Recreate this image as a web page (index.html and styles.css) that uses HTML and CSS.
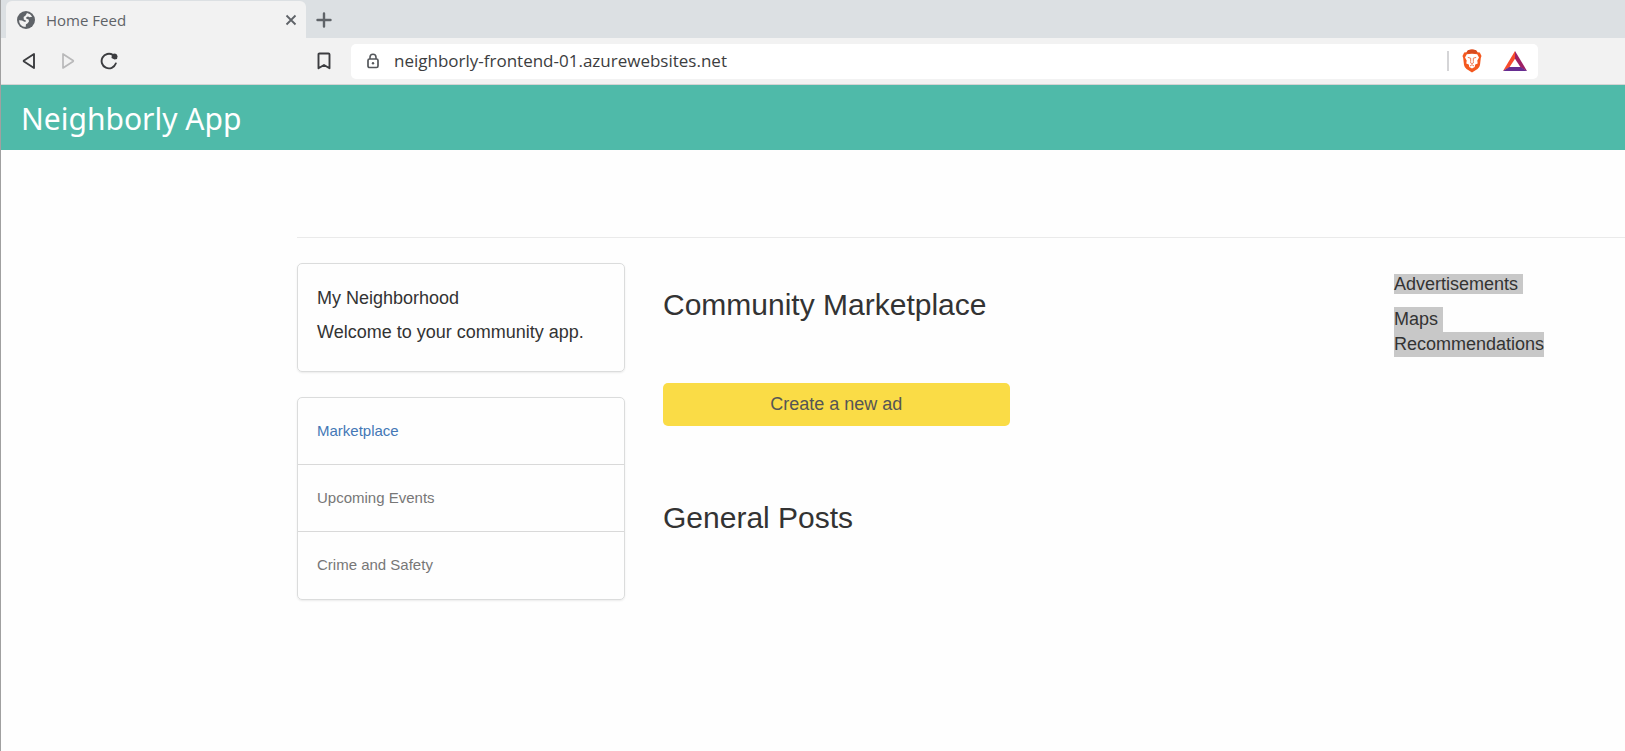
FILE: index.html
```html
<!DOCTYPE html>
<html lang="en">
<head>
<meta charset="utf-8">
<meta name="viewport" content="width=device-width, initial-scale=1">
<title>Home Feed</title>
<link rel="stylesheet" href="styles.css">
</head>
<body>
<div class="window">
  <div class="tab-strip">
    <div class="tab">
      <svg class="globe" width="18" height="18" viewBox="0 0 18 18" aria-hidden="true">
        <circle cx="9" cy="9" r="9" fill="#5f6368"/>
        <path d="M10 2Q13.500 2.600 15.200 5.800L12.600 6.200L11 5.400L9.200 6.200L9.400 7.800L11.600 8.600L12 10.600L10.400 12.400L9 13.200L8.600 16Q2.400 15.400 2 9.200L5 9.400L7.400 10.800L9 10.600L8.800 9.600L6.800 8.400L6.600 6L8.600 4.600z" fill="#f2f2f2"/>
      </svg>
      <span class="tab-title">Home Feed</span>
      <button class="icon-button" aria-label="Close tab">
        <svg width="12" height="12" viewBox="0 0 12 12"><path d="M1.500 1.500l9 9M10.500 1.500l-9 9" stroke="#5f6368" stroke-width="1.800"/></svg>
      </button>
    </div>
    <button class="icon-button new-tab" aria-label="New tab">
      <svg width="16" height="16" viewBox="0 0 16 16"><path d="M8 1.500v13M1.500 8h13" stroke="#5f6368" stroke-width="2.400" stroke-linecap="round"/></svg>
    </button>
  </div>

  <div class="toolbar">
    <div class="history">
      <button class="icon-button" aria-label="Back">
        <svg width="14" height="18" viewBox="0 0 14 18"><path d="M12 2v14L2 9.500Q1.400 9 2 8.500z" fill="none" stroke="#3c3d40" stroke-width="1.900" stroke-linejoin="round"/></svg>
      </button>
      <button class="icon-button" aria-label="Forward" disabled>
        <svg width="14" height="18" viewBox="0 0 14 18"><path d="M2 2v14l10-6.500q.6-.5 0-1z" fill="none" stroke="#b9b9ba" stroke-width="1.700" stroke-linejoin="round"/></svg>
      </button>
      <button class="icon-button" aria-label="Reload">
        <svg width="18" height="18" viewBox="0 0 18 18"><path d="M15.800 11.500A7.300 7.300 0 1 1 13 3" fill="none" stroke="#3c3d40" stroke-width="1.900" stroke-linecap="round"/><path d="M12 2l3-.5q2.500.5 2.500 3l-.5 2.500-2.500.5-3-1.500z" fill="#3c3d40"/></svg>
      </button>
    </div>
    <button class="icon-button bookmark" aria-label="Bookmark">
      <svg width="14" height="18" viewBox="0 0 14 18"><path d="M2.500 1.500h9q1 0 1 1v13.800L7 13l-5.500 3.300V2.500q0-1 1-1z" fill="none" stroke="#3c3d40" stroke-width="1.900" stroke-linejoin="round"/></svg>
    </button>
    <div class="address">
      <svg class="lock" width="14" height="16" viewBox="0 0 14 16" aria-hidden="true"><rect x="2" y="6" width="10" height="8.500" rx="1.500" fill="none" stroke="#55585c" stroke-width="1.700"/><path d="M4 6V4.200a3 3 0 0 1 6 0V6" fill="none" stroke="#55585c" stroke-width="1.600"/><circle cx="7" cy="10.200" r="1.200" fill="#55585c"/></svg>
      <input class="url" type="text" aria-label="Address" value="neighborly-frontend-01.azurewebsites.net">
      <span class="divider"></span>
      <button class="icon-button" aria-label="Brave Shields">
        <svg width="20" height="24" viewBox="0 0 20 24"><path d="M6 1.300Q10-.1 14 1.300L15.500 3.200L17.800 3.400L19.500 7L18.800 9L18 16Q17.500 18.500 15.500 20L10 23.500L4.500 20Q2.500 18.500 2 16L1.200 9L.5 7L2.200 3.400L4.500 3.200z" fill="#f4581f"/><path d="M6 1.300Q10-.1 14 1.300L15.500 3.200L14 4.400H6L4.500 3.200z" fill="#d64b20"/><path d="M4.800 5.300L10 4.700L15.200 5.300L17 8.500L15.300 11.500L15.700 14.500L13.200 15.500L12.700 18L10 19.500L7.300 18L6.800 15.500L4.300 14.500L4.700 11.500L3 8.500z" fill="#fff"/><path d="M5.800 8.400l2.900.8M14.200 8.400l-2.900.8M8.700 9.200v3.600M11.300 9.200v3.600M8 13.400l2 1.200 2-1.200M8 17l2-1.300 2 1.300" fill="none" stroke="#f1683a" stroke-width=".9"/></svg>
      </button>
      <button class="icon-button" aria-label="Rewards">
        <svg width="24" height="20" viewBox="0 0 24 20"><path d="M12 0v7.800L6.300 16.600L0 20z" fill="#f84c2c"/><path d="M12 0l12 20-6.300-3.400L12 7.800z" fill="#9e1f63"/><path d="M0 20l6.300-4h11.400L24 20z" fill="#662d91"/></svg>
      </button>
    </div>
  </div>

  <header class="app-header">
    <h1 class="app-title">Neighborly App</h1>
  </header>

  <div class="page">
    <hr class="rule">
    <div class="columns">
      <aside class="sidebar">
        <section class="card intro">
          <h2 class="intro-title">My Neighborhood</h2>
          <p class="intro-text">Welcome to your community app.</p>
        </section>
        <nav class="card menu">
          <a class="menu-item active" href="#marketplace">Marketplace</a>
          <a class="menu-item" href="#events">Upcoming Events</a>
          <a class="menu-item" href="#safety">Crime and Safety</a>
        </nav>
      </aside>
      <main class="feed">
        <h2 class="feed-title" id="marketplace">Community Marketplace</h2>
        <button class="create">Create a new ad</button>
        <h2 class="feed-title">General Posts</h2>
      </main>
      <aside class="extras">
        <h3 class="extras-title"><span class="selected tail">Advertisements</span></h3>
        <div class="selected block tail">Maps</div>
        <div class="selected block">Recommendations</div>
      </aside>
    </div>
  </div>
</div>
</body>
</html>
```

FILE: styles.css
```css
* {
  box-sizing: border-box;
}

body {
  margin: 0;
  background: #fefefe;
  color: #333;
  font: 18px/25px "Liberation Sans", Arial, sans-serif;
}

h1, h2, h3, p {
  margin: 0;
  font-weight: 400;
}

.window {
  min-height: 100vh;
  border-left: 1px solid #a0a0a0;
}

.icon-button {
  display: flex;
  align-items: center;
  justify-content: center;
  padding: 0;
  border: 0;
  background: none;
}

/* Browser chrome */
.tab-strip {
  display: flex;
  align-items: stretch;
  height: 38px;
  padding: 1px 0 0 5px;
  background: #dce0e3;
}

.tab {
  display: flex;
  align-items: center;
  width: 300px;
  padding: 0 9px 0 11px;
  border-radius: 6px 6px 0 0;
  background: #f2f2f2;
}

.tab-title {
  flex: 1;
  padding-left: 11px;
  color: #5f6368;
  font: 15px/20px "Open Sans", sans-serif;
}

.new-tab {
  margin-left: 10px;
}

.toolbar {
  display: flex;
  align-items: center;
  height: 47px;
  padding: 0 87px 0 21px;
  border-bottom: 1px solid #d4d4d4;
  background: #f2f2f2;
}

.history {
  display: flex;
  gap: 25px;
}

.bookmark {
  margin-left: 199px;
}

.address {
  display: flex;
  flex: 1;
  align-items: center;
  height: 35px;
  margin-left: 20px;
  padding: 0 11px 0 15px;
  border-radius: 5px;
  background: #fff;
}

.url {
  flex: 1;
  min-width: 0;
  margin-left: 14px;
  padding: 0;
  border: 0;
  outline: 0;
  background: none;
  color: #3c3d40;
  font: 17px/24px "Open Sans", sans-serif;
}

.divider {
  width: 2px;
  height: 20px;
  margin-right: 13px;
  background: #d5d5d7;
}

.address .icon-button + .icon-button {
  margin-left: 21px;
}

/* App */
.app-header {
  padding: 14px 20px 11px;
  background: #4fbaa9;
}

.app-title {
  color: #fff;
  font: 30px/40px "Noto Sans", sans-serif;
}

.page {
  padding: 87px 0 40px 296px;
}

.rule {
  margin: 0 0 25px;
  border: 0;
  border-top: 1px solid #eaeaea;
}

.columns {
  display: grid;
  grid-template-columns: 328px 1fr 193px;
  gap: 38px;
  padding-right: 38px;
}

.sidebar {
  display: grid;
  align-content: start;
  gap: 25px;
}

.card {
  border: 1px solid #dbdcdc;
  border-radius: 5px;
  box-shadow: 0 1px 2px rgba(0, 0, 0, 0.08);
}

.intro {
  padding: 22px 19px 26px;
}

.intro-title {
  margin-bottom: 9px;
  font-size: 18px;
  line-height: 25px;
}

.menu {
  padding-bottom: 1px;
}

.menu-item {
  display: block;
  padding: 22px 19px;
  color: #777;
  font-size: 15px;
  line-height: 22px;
  text-decoration: none;
}

.menu-item + .menu-item {
  border-top: 1px solid #d9d9d9;
}

.menu-item.active {
  color: #4478b6;
}

.feed {
  padding-top: 24px;
}

.feed-title {
  font-size: 30px;
  line-height: 36px;
}

.create {
  display: block;
  width: 50%;
  margin: 60px 0 74px;
  padding: 9px;
  border: 0;
  border-radius: 5px;
  background: #fadc46;
  color: #555;
  font: inherit;
}

.extras {
  padding-top: 11px;
}

.extras-title {
  margin-bottom: 13px;
  font-size: 18px;
  line-height: 20px;
}

.selected {
  background: #c8c8c8;
}

.tail {
  padding-right: 5px;
}

.block {
  width: fit-content;
}
```
